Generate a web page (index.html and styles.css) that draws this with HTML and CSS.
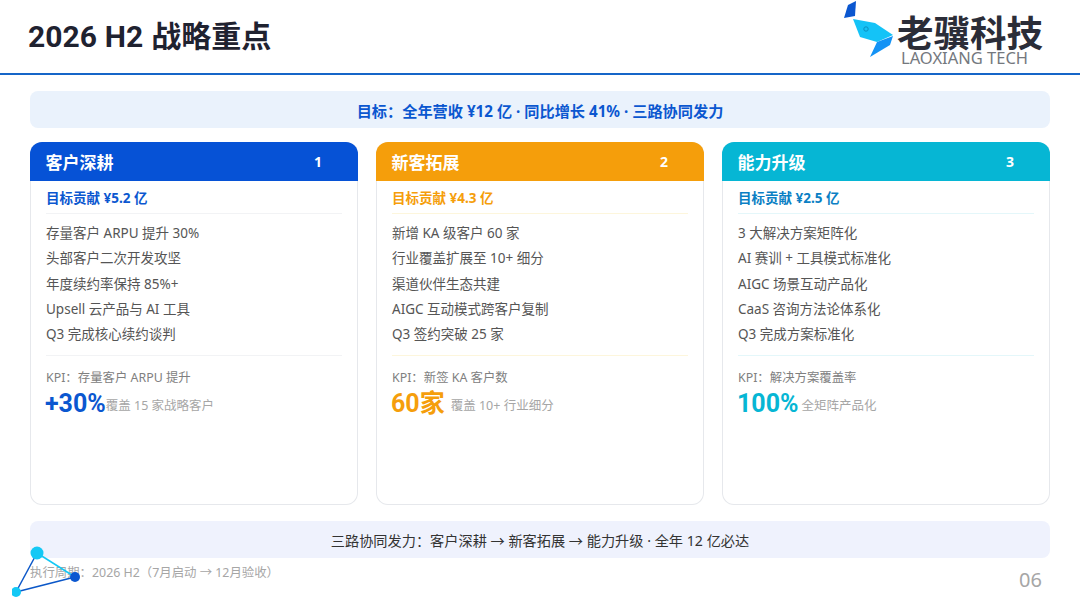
FILE: index.html

```html
<!DOCTYPE html>
<html lang="zh-CN">
	<head>
		<meta charset="UTF-8">
		<title>2026 H2 战略重点</title>
		<link rel="stylesheet" href="styles.css">
	</head>
	<body>
	<div class="slide">
		<div class="header">
			<h1 class="title">2026 H2 战略重点</h1>
			<div class="logo">
				<svg class="logo-mark" width="50" height="60" viewBox="844 0 50 60">
					<polygon points="844,18 848,5 856,1 855,16" fill="#0b57d0"/>
					<polygon points="853,19 875,23 893,35 877,42 860,37" fill="#14c3f7"/>
					<polygon points="877,42 893,36 890,45 870,57" fill="#1493f5"/>
					<circle cx="866" cy="29" r="2.2" fill="none" stroke="#0b8fc0" stroke-width="1"/>
				</svg>
				<div class="logo-text">
					<div class="logo-cn">老骥科技</div>
					<div class="logo-en">LAOXIANG TECH</div>
				</div>
			</div>
		</div>

		<div class="band band-goal">目标：全年营收 ¥12 亿 · 同比增长 41% · 三路协同发力</div>

		<div class="cards">
			<div class="card blue">
				<div class="card-head"><span>客户深耕</span><span class="num">1</span></div>
				<div class="card-body">
					<div class="contrib">目标贡献 ¥5.2 亿</div>
					<ul class="items">
						<li>存量客户 ARPU 提升 30%</li>
						<li>头部客户二次开发攻坚</li>
						<li>年度续约率保持 85%+</li>
						<li>Upsell 云产品与 AI 工具</li>
						<li>Q3 完成核心续约谈判</li>
					</ul>
					<div class="kpi">KPI：存量客户 ARPU 提升</div>
					<div class="kpi-row"><span class="big">+30%</span><span class="note">覆盖 15 家战略客户</span></div>
				</div>
			</div>
			<div class="card orange">
				<div class="card-head"><span>新客拓展</span><span class="num">2</span></div>
				<div class="card-body">
					<div class="contrib">目标贡献 ¥4.3 亿</div>
					<ul class="items">
						<li>新增 KA 级客户 60 家</li>
						<li>行业覆盖扩展至 10+ 细分</li>
						<li>渠道伙伴生态共建</li>
						<li>AIGC 互动模式跨客户复制</li>
						<li>Q3 签约突破 25 家</li>
					</ul>
					<div class="kpi">KPI：新签 KA 客户数</div>
					<div class="kpi-row"><span class="big">60家</span><span class="note">覆盖 10+ 行业细分</span></div>
				</div>
			</div>
			<div class="card cyan">
				<div class="card-head"><span>能力升级</span><span class="num">3</span></div>
				<div class="card-body">
					<div class="contrib">目标贡献 ¥2.5 亿</div>
					<ul class="items">
						<li>3 大解决方案矩阵化</li>
						<li>AI 赛训 + 工具模式标准化</li>
						<li>AIGC 场景互动产品化</li>
						<li>CaaS 咨询方法论体系化</li>
						<li>Q3 完成方案标准化</li>
					</ul>
					<div class="kpi">KPI：解决方案覆盖率</div>
					<div class="kpi-row"><span class="big">100%</span><span class="note">全矩阵产品化</span></div>
				</div>
			</div>
		</div>

		<div class="band band-flow">三路协同发力：客户深耕 → 新客拓展 → 能力升级 · 全年 12 亿必达</div>

		<div class="footer">
			<span class="period">执行周期：2026 H2（7月启动 → 12月验收）</span>
			<span class="page">06</span>
		</div>

		<svg class="corner" width="72" height="60" viewBox="0 0 72 60">
			<line x1="25" y1="7" x2="63" y2="31" stroke="#14c8f5" stroke-width="1.5"/>
			<line x1="25" y1="7" x2="4" y2="46" stroke="#0b57c8" stroke-width="1.5"/>
			<line x1="4" y1="46" x2="63" y2="31" stroke="#0b57c8" stroke-width="1.5"/>
			<circle cx="25" cy="7" r="6.5" fill="#14c8f5"/>
			<circle cx="63" cy="31" r="5" fill="#0b57d0"/>
			<circle cx="4" cy="46" r="5" fill="#14c8f5"/>
		</svg>
	</div>
	</body>
</html>
```

FILE: styles.css

```css
* {
	box-sizing: border-box;
}

html, body {
	margin: 0;
	padding: 0;
}

body {
	font-family: "Noto Sans", "Noto Sans CJK SC", sans-serif;
	background-color: #fff;
	color: #555;
}

.slide {
	width: 1080px;
	height: 608px;
	position: relative;
	overflow: hidden;
	display: flex;
	flex-direction: column;
}

.header {
	height: 75px;
	flex: none;
	border-bottom: 2.5px solid #1565c8;
	padding: 0 37px 0 28px;
	display: flex;
	justify-content: space-between;
}

.title {
	margin: 17px 0 0;
	font-family: Roboto, "Noto Sans CJK SC", sans-serif;
	font-size: 30px;
	line-height: 40px;
	font-weight: 700;
	word-spacing: .5px;
	color: #1f2230;
}

.logo {
	display: flex;
	gap: 3px;
}

.logo-text {
	padding-top: 13px;
	width: 146px;
}

.logo-cn {
	font-family: "Noto Sans CJK SC", sans-serif;
	font-size: 36.5px;
	line-height: 38px;
	font-weight: 700;
	color: #2b2d38;
	white-space: nowrap;
}

.logo-en {
	font-size: 16.5px;
	line-height: 16px;
	margin-top: -1px;
	padding-left: 4px;
	color: #74787e;
	white-space: nowrap;
}

.band {
	margin: 0 30px;
	height: 37px;
	flex: none;
	border-radius: 8px;
	display: flex;
	align-items: center;
	justify-content: center;
	font-size: 14.2px;
}

.band-goal {
	margin-top: 16px;
	background-color: #eaf2fc;
	color: #0b57d0;
	font-size: 15.2px;
	font-weight: 700;
}

.band-flow {
	margin-top: 16px;
	background-color: #eff2fd;
	color: #333;
}

.cards {
	margin: 14px 30px 0;
	display: grid;
	grid-template-columns: 1fr 1fr 1fr;
	grid-gap: 18px;
	height: 363px;
	flex: none;
}

.card {
	background-color: #fff;
	box-shadow: inset 0 0 0 1px #e6e8ec;
	border-radius: 12px;
	overflow: hidden;
}

.card-head {
	height: 39px;
	padding: 0 36px 0 15.5px;
	display: flex;
	align-items: center;
	justify-content: space-between;
	color: #fff;
	font-size: 17px;
	font-weight: 700;
}

.num {
	font-size: 14px;
}

.card-body {
	padding: 0 16px;
}

.contrib {
	height: 33px;
	padding-top: 7px;
	line-height: 20px;
	font-size: 13.5px;
	font-weight: 700;
	border-bottom: 1px solid #f2f3f5;
}

.items {
	list-style: none;
	margin: 0;
	padding: 7px 0 8px;
	border-bottom: 1px solid #f2f3f5;
}

.items li {
	height: 25.3px;
	line-height: 25.3px;
	font-size: 13.5px;
	white-space: nowrap;
}

.kpi {
	margin-top: 12px;
	line-height: 20px;
	font-size: 12.4px;
	color: #808080;
}

.kpi-row {
	display: flex;
	align-items: center;
	line-height: 28px;
}

.big {
	font-family: Roboto, "Noto Sans CJK SC", sans-serif;
	font-size: 25px;
	font-weight: 700;
	margin-left: -1px;
}

.note {
	font-size: 12.5px;
	color: #a6a6a6;
	padding-top: 4px;
}

.blue .card-head { background-color: #0652d6; }
.blue .contrib, .blue .big { color: #0b57d0; }

.orange .card-head { background-color: #f59e0b; }
.orange .contrib, .orange .big { color: #f59e0b; }
.orange .contrib, .orange .items { border-bottom-color: #fdf6dc; }
.orange .note { margin-left: 6px; }

.cyan .card-head { background-color: #06b6d4; }
.cyan .contrib { color: #0b7fc4; }
.cyan .big { color: #06b6d4; }
.cyan .contrib, .cyan .items { border-bottom-color: #e4f7fa; }
.cyan .note { margin-left: 3px; }

.footer {
	margin: 0 38px 0 30px;
	display: flex;
	justify-content: space-between;
	align-items: flex-start;
}

.period {
	margin-top: 5px;
	font-size: 12.4px;
	line-height: 20px;
	color: #a6a6a6;
}

.page {
	margin-top: 9px;
	font-size: 20px;
	line-height: 26px;
	color: #a6a6a6;
}

/* corner mark sits over the footer band */
.corner {
	position: absolute;
	left: 12px;
	top: 546px;
}
```
